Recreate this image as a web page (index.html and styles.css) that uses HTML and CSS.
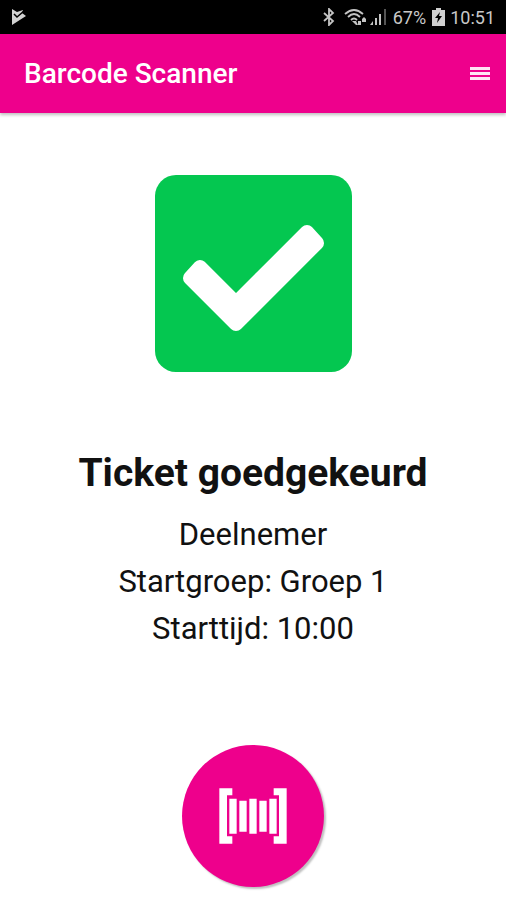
FILE: index.html
```html
<!DOCTYPE html>
<html lang="nl">
<head>
<meta charset="utf-8">
<meta name="viewport" content="width=device-width, initial-scale=1">
<title>Barcode Scanner</title>
<link rel="stylesheet" href="styles.css">
</head>
<body>
<div class="status">
  <svg class="status-app" width="16" height="18" viewBox="0 0 16 18" aria-hidden="true">
    <path d="M1 1 6 4 12 2 11 5 15 8 1 17Z" fill="#d2d2d2"/>
    <path d="M3 6 6 9 13 3" fill="none" stroke="#000" stroke-width="1.5"/>
  </svg>
  <div class="status-info">
    <svg width="14" height="18" viewBox="0 0 14 18" aria-hidden="true">
      <path d="M2 5 11 13 7 17V1L11 5 2 13" fill="none" stroke="#c4c4c4" stroke-width="1.8"/>
    </svg>
    <svg class="wifi" width="23" height="18" viewBox="0 0 23 18" aria-hidden="true">
      <g fill="none" stroke="#c4c4c4" stroke-width="1.8">
        <path d="M1 6Q10-2 19 6"/>
        <path d="M4 9Q10 3 16 9"/>
        <path d="M7 12Q10 9 13 12"/>
      </g>
      <path d="M8 13H12L14 17H12ZM14 13H17V17H14ZM18 11 20 9 22 11V14H18Z" fill="#c4c4c4"/>
    </svg>
    <svg width="18" height="18" viewBox="0 0 18 18" aria-hidden="true">
      <path d="M1 17 4 13V17ZM6 10H8V17H6ZM10 6H12V17H10Z" fill="#c4c4c4"/>
      <path d="M15 1H17V17H15Z" fill="#555"/>
    </svg>
    <span class="battery-level">67%</span>
    <svg class="battery" width="13" height="18" viewBox="0 0 13 18" aria-hidden="true">
      <path d="M4 0H9V2H13V18H0V2H4Z" fill="#d0d0d0"/>
      <path d="M8 4 3 10H6L5 15 10 8H7Z" fill="#000"/>
    </svg>
    <time>10:51</time>
  </div>
</div>
<header class="bar">
  <h1>Barcode Scanner</h1>
  <button class="menu" type="button" aria-label="Menu">
    <svg width="20" height="14" viewBox="0 0 20 14" aria-hidden="true">
      <path d="M0 0H20V3H0ZM0 5H20V8H0ZM0 10H20V13H0Z" fill="#ffe3f4"/>
    </svg>
  </button>
</header>
<main class="result">
  <svg class="check" viewBox="0 0 197 197" role="img" aria-label="Goedgekeurd">
    <rect width="197" height="197" rx="21" fill="#04c750"/>
    <path d="M45 92 81 128 152 57 162 68 81 149 35 103Z" fill="#fff" stroke="#fff" stroke-width="14" stroke-linejoin="round"/>
  </svg>
  <h2>Ticket goedgekeurd</h2>
  <p>Deelnemer</p>
  <p>Startgroep: Groep 1</p>
  <p>Starttijd: 10:00</p>
  <button class="scan" type="button" aria-label="Scan barcode">
    <svg width="68" height="56" viewBox="0 0 204 168" aria-hidden="true">
      <path d="M1 1H40V22H24V145H40V167H1ZM164 1H203V167H164V145H180V22H164ZM31 32H53V137H31ZM61 38H83V131H61ZM91 32H113V137H91ZM121 38H143V131H121ZM151 32H173V137H151Z" fill="#fff"/>
    </svg>
  </button>
</main>
</body>
</html>
```
FILE: styles.css
```css
* {
  box-sizing: border-box;
}

body {
  margin: 0;
  min-height: 100vh;
  background: #fff;
  color: #111;
  font-family: Roboto, "Liberation Sans", sans-serif;
}

svg {
  display: block;
}

button {
  border: 0;
  padding: 0;
  cursor: pointer;
}

.status {
  display: flex;
  align-items: center;
  justify-content: space-between;
  height: 34px;
  padding: 0 11px;
  background: #000;
  color: #c8c8c8;
  font-size: 18px;
}

.status-info {
  display: flex;
  align-items: center;
}

.wifi {
  margin-left: 8px;
  margin-right: 2px;
}

.battery-level {
  margin-left: 6px;
}

.battery {
  margin: 0 5px 0 6px;
}

.bar {
  display: flex;
  align-items: center;
  justify-content: space-between;
  height: 79px;
  padding: 0 16px 0 24px;
  background: #ee008c;
  color: #fff;
  box-shadow: 0 2px 3px rgba(0, 0, 0, 0.25);
}

.bar h1 {
  margin: 0;
  font-size: 28px;
  font-weight: 500;
}

.menu {
  background: transparent;
}

.result {
  display: flex;
  flex-direction: column;
  align-items: center;
  padding: 62px 16px 12px;
  text-align: center;
}

.check {
  width: 197px;
  height: 197px;
}

.result h2 {
  margin: 77px 0 14px;
  font-size: 39px;
  font-weight: 700;
  line-height: 48px;
}

.result p {
  margin: 0;
  font-size: 31px;
  font-weight: 400;
  line-height: 47px;
}

.scan {
  display: grid;
  place-items: center;
  width: 142px;
  height: 142px;
  margin-top: 93px;
  border-radius: 50%;
  background: #ee008c;
  box-shadow: 2px 2px 2px rgba(0, 0, 0, 0.25);
}
```
